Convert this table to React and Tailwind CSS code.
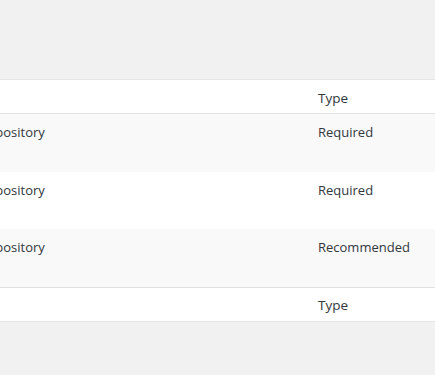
export default function App() {
  const rows = [
    { name: 'Repository', type: 'Required', cls: 'h-[58px] bg-[#f9f9f9]' },
    { name: 'Repository', type: 'Required', cls: 'h-[57px] bg-white' },
    { name: 'Repository', type: 'Recommended', cls: 'h-[58px] bg-[#f9f9f9]' },
  ];

  return (
    <div className="min-h-screen w-[435px] overflow-hidden bg-[#f1f1f1] pt-[79px] text-[13px] text-[#32373c] font-['Open_Sans',sans-serif]">
      <div className="border-y border-[#e5e5e5] bg-white">
        {/* header */}
        <div className="flex h-[34px] items-center border-b border-[#e1e1e1] pt-[3px]">
          <div className="w-[318px] shrink-0" />
          <div className="text-[13.5px]">Type</div>
        </div>

        {rows.map((row, i) => (
          <div key={i} className={`flex items-start pt-[8px] ${row.cls}`}>
            <div className="w-[318px] shrink-0 overflow-hidden">
              <span className="ml-[-20px] block leading-[20px]">{row.name}</span>
            </div>
            <div className="leading-[20px]">{row.type}</div>
          </div>
        ))}

        {/* footer */}
        <div className="flex h-[34px] items-center border-t border-[#e1e1e1] pt-[2px]">
          <div className="w-[318px] shrink-0" />
          <div className="text-[13.5px]">Type</div>
        </div>
      </div>
    </div>
  );
}
